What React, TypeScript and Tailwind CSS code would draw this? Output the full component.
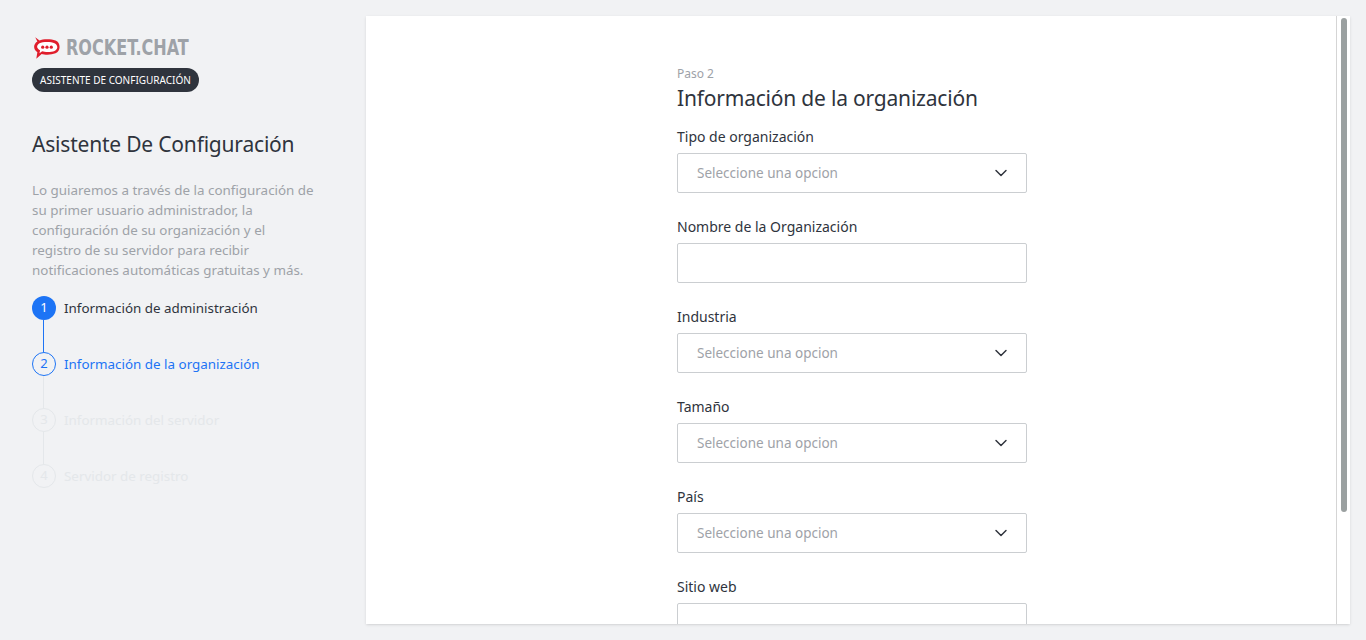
import React from 'react';
import { ChevronDown } from 'lucide-react';

const steps = [
  { n: 1, label: 'Información de administración', state: 'done' },
  { n: 2, label: 'Información de la organización', state: 'active' },
  { n: 3, label: 'Información del servidor', state: 'todo' },
  { n: 4, label: 'Servidor de registro', state: 'todo' },
];

const fields = [
  { label: 'Tipo de organización', select: true },
  { label: 'Nombre de la Organización', select: false },
  { label: 'Industria', select: true },
  { label: 'Tamaño', select: true },
  { label: 'País', select: true },
  { label: 'Sitio web', select: false },
];

function Logo() {
  return (
    <div className="flex h-[24px] items-center gap-[4px]">
      <svg width="30" height="24" viewBox="0 0 28 22">
        <path d="M3 1 L7 4 C10 2.5 18 2.5 22 4 C27 6 27 14 22 16 C18 17.5 12 17.5 9 16.5 L4 21 L5 15 C1 12.5 1 7.5 5 5 Z" fill="#e01e2c" />
        <path d="M7 6.5 C10 5 18 5 21 6.5 C24.5 8.5 24.5 12 21 13.8 C18 15 12 15 9.5 14 L7 16 L7.5 13 C4 11 4 8.5 7 6.5 Z" fill="#fff" />
        <circle cx="10" cy="10.2" r="1.5" fill="#e01e2c" />
        <circle cx="14" cy="10.2" r="1.5" fill="#e01e2c" />
        <circle cx="18" cy="10.2" r="1.5" fill="#e01e2c" />
      </svg>
      <span
        className="origin-left scale-x-[0.85] text-[21px] font-bold leading-none text-[#9ea2a8]"
        style={{ fontFamily: '"DejaVu Sans Condensed", "Liberation Sans", sans-serif' }}
      >
        ROCKET.CHAT
      </span>
    </div>
  );
}

export default function App() {
  return (
    <div className="flex h-[640px] w-full overflow-hidden bg-[#f1f2f4] text-[#2f343d]" style={{ fontFamily: '"Noto Sans", sans-serif' }}>
      <aside className="w-[366px] shrink-0 pl-8 pr-[50px] pt-[36px]">
        <Logo />
        <div className="mt-[8px] inline-block rounded-full bg-[#2f343d] px-2 py-[6px] text-[10px] leading-[12px] text-white">
          ASISTENTE DE CONFIGURACIÓN
        </div>
        <h1 className="mt-[37px] text-[21px] leading-[30px] tracking-[-0.2px] text-[#2f343d]">Asistente De Configuración</h1>
        <p className="mt-[21px] text-[13.4px] leading-[20px] text-[#9ea2a8]">
          Lo guiaremos a través de la configuración de su primer usuario administrador, la configuración de su organización y el registro de su servidor para recibir notificaciones automáticas gratuitas y más.
        </p>
        <ol className="mt-[16px]">
          {steps.map((s, i) => (
            <li key={s.n} className="relative flex h-[56px] items-start gap-[8px]">
              {i < steps.length - 1 && (
                <span className={`absolute left-[11px] top-[24px] h-[32px] w-px ${s.state === 'done' ? 'bg-[#1d74f5]' : 'bg-[#e4e7ea]'}`} />
              )}
              <span
                className={`flex h-[24px] w-[24px] items-center justify-center rounded-full text-[13px] ${
                  s.state === 'done'
                    ? 'bg-[#1d74f5] text-white'
                    : s.state === 'active'
                    ? 'border border-[#1d74f5] text-[#1d74f5]'
                    : 'border border-[#e4e7ea] text-[#e4e7ea]'
                }`}
              >
                {s.n}
              </span>
              <span
                className={`text-[13.4px] leading-[24px] ${
                  s.state === 'done' ? 'text-[#2f343d]' : s.state === 'active' ? 'text-[#1d74f5]' : 'text-[#e4e7ea]'
                }`}
              >
                {s.label}
              </span>
            </li>
          ))}
        </ol>
      </aside>
      <main className="relative mt-4 mb-4 mr-4 flex-1 overflow-hidden bg-white shadow-sm">
        <div className="w-[350px] pt-[50px]" style={{ marginLeft: 311 }}>
          <div className="text-[12px] leading-[16px] text-[#9ea2a8]">Paso 2</div>
          <h2 className="mt-[1px] text-[21px] leading-[30px] tracking-[-0.2px] text-[#2f343d]">Información de la organización</h2>
          <div className="mt-[14px]">
            {fields.map((f) => (
              <div key={f.label} className="h-[90px]">
                <div className="text-[14px] leading-[20px] text-[#2f343d]">{f.label}</div>
                <div className="mt-[6px] flex h-[40px] items-center justify-between rounded-[2px] border border-[#cbced1] px-[19px]">
                  {f.select && (
                    <>
                      <span className="text-[13.5px] text-[#9ea2a8]">Seleccione una opcion</span>
                      <ChevronDown className="-mr-[4px] h-5 w-5 text-[#2f343d]" strokeWidth={1.75} />
                    </>
                  )}
                </div>
              </div>
            ))}
          </div>
        </div>
        <div className="absolute right-0 top-0 h-full w-[14px] border-l border-[#d5d5d5] bg-white">
          <div className="mx-auto mt-[2px] h-[494px] w-[6px] rounded-full bg-[#9aa0a0]" />
        </div>
      </main>
    </div>
  );
}
